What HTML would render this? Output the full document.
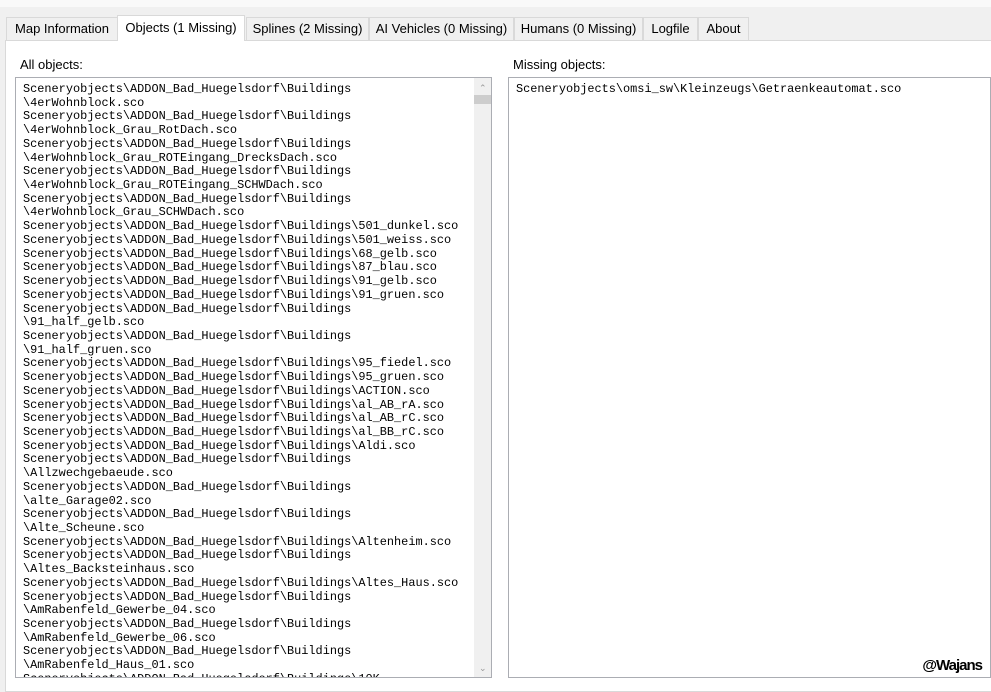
<!DOCTYPE html>
<html><head><meta charset="utf-8"><style>
body{margin:0;width:991px;height:684px;background:#f0f0f0;position:relative;overflow:hidden;font-family:"Liberation Sans",sans-serif;}
.top{position:absolute;left:0;top:0;width:991px;height:7px;background:#f9f9f9;}
.tab{position:absolute;top:17px;height:23px;border:1px solid #d9d9d9;border-bottom:none;background:#f0f0f0;font-size:13px;color:#000;line-height:22px;text-align:center;box-sizing:border-box;}
.sel{top:15px;height:26px;background:#fff;z-index:2;border-color:#d9d9d9;line-height:24px;}
.panel{position:absolute;left:5px;top:40px;width:990px;height:650px;background:#fff;border:1px solid #d9d9d9;}
.lbl{position:absolute;font-size:13px;}
.box{position:absolute;border:1px solid #abadb3;background:#fff;overflow:hidden;}
pre{margin:0;font-family:"Liberation Mono",monospace;font-size:11.9px;line-height:13.72px;color:#000;}
.sb{position:absolute;right:0;top:0;width:17px;height:100%;background:#f0f0f0;}
</style></head><body>
<div class="top"></div>
<div class="panel"></div>
<div class="tab" style="left:6px;width:112px">Map Information</div>
<div class="tab sel" style="left:117px;width:128px">Objects (1 Missing)</div>
<div class="tab" style="left:246px;width:123px">Splines (2 Missing)</div>
<div class="tab" style="left:369px;width:145px">AI Vehicles (0 Missing)</div>
<div class="tab" style="left:514px;width:129px">Humans (0 Missing)</div>
<div class="tab" style="left:643px;width:55px">Logfile</div>
<div class="tab" style="left:698px;width:51px">About</div>
<div class="lbl" style="left:20px;top:57px">All objects:</div>
<div class="lbl" style="left:513px;top:57px">Missing objects:</div>
<div class="box" style="left:15px;top:77px;width:475px;height:599px">
<pre style="padding:5px 0 0 7px">Sceneryobjects\ADDON_Bad_Huegelsdorf\Buildings
\4erWohnblock.sco
Sceneryobjects\ADDON_Bad_Huegelsdorf\Buildings
\4erWohnblock_Grau_RotDach.sco
Sceneryobjects\ADDON_Bad_Huegelsdorf\Buildings
\4erWohnblock_Grau_ROTEingang_DrecksDach.sco
Sceneryobjects\ADDON_Bad_Huegelsdorf\Buildings
\4erWohnblock_Grau_ROTEingang_SCHWDach.sco
Sceneryobjects\ADDON_Bad_Huegelsdorf\Buildings
\4erWohnblock_Grau_SCHWDach.sco
Sceneryobjects\ADDON_Bad_Huegelsdorf\Buildings\501_dunkel.sco
Sceneryobjects\ADDON_Bad_Huegelsdorf\Buildings\501_weiss.sco
Sceneryobjects\ADDON_Bad_Huegelsdorf\Buildings\68_gelb.sco
Sceneryobjects\ADDON_Bad_Huegelsdorf\Buildings\87_blau.sco
Sceneryobjects\ADDON_Bad_Huegelsdorf\Buildings\91_gelb.sco
Sceneryobjects\ADDON_Bad_Huegelsdorf\Buildings\91_gruen.sco
Sceneryobjects\ADDON_Bad_Huegelsdorf\Buildings
\91_half_gelb.sco
Sceneryobjects\ADDON_Bad_Huegelsdorf\Buildings
\91_half_gruen.sco
Sceneryobjects\ADDON_Bad_Huegelsdorf\Buildings\95_fiedel.sco
Sceneryobjects\ADDON_Bad_Huegelsdorf\Buildings\95_gruen.sco
Sceneryobjects\ADDON_Bad_Huegelsdorf\Buildings\ACTION.sco
Sceneryobjects\ADDON_Bad_Huegelsdorf\Buildings\al_AB_rA.sco
Sceneryobjects\ADDON_Bad_Huegelsdorf\Buildings\al_AB_rC.sco
Sceneryobjects\ADDON_Bad_Huegelsdorf\Buildings\al_BB_rC.sco
Sceneryobjects\ADDON_Bad_Huegelsdorf\Buildings\Aldi.sco
Sceneryobjects\ADDON_Bad_Huegelsdorf\Buildings
\Allzwechgebaeude.sco
Sceneryobjects\ADDON_Bad_Huegelsdorf\Buildings
\alte_Garage02.sco
Sceneryobjects\ADDON_Bad_Huegelsdorf\Buildings
\Alte_Scheune.sco
Sceneryobjects\ADDON_Bad_Huegelsdorf\Buildings\Altenheim.sco
Sceneryobjects\ADDON_Bad_Huegelsdorf\Buildings
\Altes_Backsteinhaus.sco
Sceneryobjects\ADDON_Bad_Huegelsdorf\Buildings\Altes_Haus.sco
Sceneryobjects\ADDON_Bad_Huegelsdorf\Buildings
\AmRabenfeld_Gewerbe_04.sco
Sceneryobjects\ADDON_Bad_Huegelsdorf\Buildings
\AmRabenfeld_Gewerbe_06.sco
Sceneryobjects\ADDON_Bad_Huegelsdorf\Buildings
\AmRabenfeld_Haus_01.sco
Sceneryobjects\ADDON_Bad_Huegelsdorf\Buildings\10K</pre>
<div class="sb"><div style="position:absolute;top:5px;left:5px;font-size:9px;color:#999">&#8963;</div><div style="position:absolute;top:17px;left:0;width:17px;height:9px;background:#cdcdcd"></div><div style="position:absolute;bottom:3px;left:5px;font-size:9px;color:#999">&#8964;</div></div>
</div>
<div class="box" style="left:508px;top:77px;width:481px;height:599px">
<pre style="padding:5px 0 0 7px">Sceneryobjects\omsi_sw\Kleinzeugs\Getraenkeautomat.sco</pre>
<div style="position:absolute;right:8px;bottom:3px;font-size:15px;font-weight:bold;color:#000;letter-spacing:-1px">@Wajans</div>
</div>
</body></html>
